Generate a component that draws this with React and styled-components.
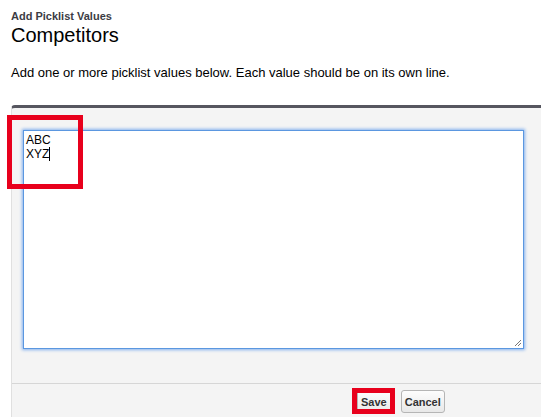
import React from 'react';
import styled, { createGlobalStyle } from 'styled-components';

const GlobalStyle = createGlobalStyle`
  html, body {
    margin: 0;
    padding: 0;
    background: #fff;
    font-family: "Liberation Sans", Arial, sans-serif;
    color: #000;
  }
`;

const Page = styled.div`
  position: relative;
  width: 541px;
  height: 417px;
  overflow: hidden;
`;

const Header = styled.div`
  padding: 10px 0 0 11px;
`;

const Crumb = styled.div`
  font-size: 11px;
  font-weight: bold;
  color: #3c3c44;
  line-height: 13px;
`;

const Title = styled.h1`
  margin: 0;
  font-size: 20px;
  font-weight: normal;
  line-height: 24px;
  color: #000;
`;

const Intro = styled.p`
  margin: 18px 0 0 11px;
  font-size: 13px;
  line-height: 16px;
  color: #000;
`;

const Panel = styled.div`
  margin: 24px 0 0 11px;
  background: #f4f4f4;
  border-top: 3px solid #56565f;
  border-left: 1px solid #e0e0e0;
  border-radius: 4px 0 0 0;
`;

const Body = styled.div`
  padding: 22px 17px 34px 11px;
  border-bottom: 1px solid #d6d6d6;
`;

const ValueBox = styled.div`
  position: relative;
  height: 213px;
  background: #fff;
  border: 1px solid #5b97e0;
  box-shadow: 0 0 3px 1px #84b1ee;
  padding: 2px 2px;
  font-size: 12px;
  line-height: 14px;
  color: #000;
`;

const Caret = styled.span`
  display: inline-block;
  width: 1px;
  height: 14px;
  background: #000;
  vertical-align: top;
`;

const Grip = styled.svg`
  position: absolute;
  right: 1px;
  bottom: 1px;
`;

const Footer = styled.div`
  display: flex;
  gap: 10px;
  padding: 6px 0 6px 345px;
`;

const Button = styled.button`
  font-family: "Liberation Sans", Arial, sans-serif;
  font-size: 11px;
  font-weight: bold;
  color: #333;
  height: 23px;
  padding: 0 3px;
  border: 1px solid #b5b5b5;
  border-radius: 3px;
  background: linear-gradient(#fdfdfd, #e8e8e8);
`;

const Highlight = styled.div`
  position: absolute;
  border: 5px solid #e8001c;
  box-sizing: border-box;
  pointer-events: none;
`;

export default function App() {
  return (
    <Page>
      <GlobalStyle />
      <Header>
        <Crumb>Add Picklist Values</Crumb>
        <Title>Competitors</Title>
      </Header>
      <Intro>Add one or more picklist values below. Each value should be on its own line.</Intro>
      <Panel>
        <Body>
          <ValueBox>
            ABC
            <br />
            XYZ<Caret />
            <Grip width="9" height="9" viewBox="0 0 9 9">
              <path d="M8 2 L2 8 M8 5 L5 8" stroke="#777" strokeWidth="1" />
            </Grip>
          </ValueBox>
        </Body>
        <Footer>
          <Button>Save</Button>
          <Button>Cancel</Button>
        </Footer>
      </Panel>
      <Highlight style={{ left: 7, top: 115, width: 76, height: 74 }} />
      <Highlight style={{ left: 352, top: 388, width: 43, height: 26 }} />
    </Page>
  );
}
